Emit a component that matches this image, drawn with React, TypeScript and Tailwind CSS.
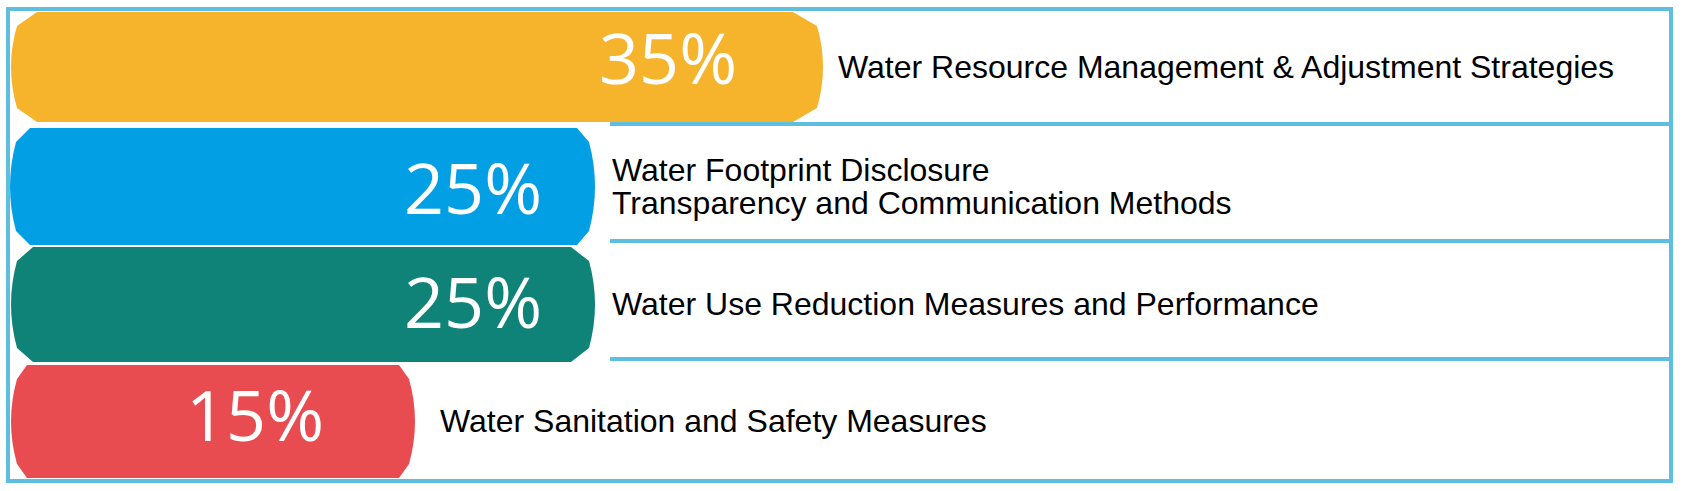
import React from 'react';

interface Row {
  pct: string;
  color: string;
  w: number;
  h: number;
  cl: number;
  cr: number;
  barCls: string;
  labelCls: string;
  lines: string[];
}

const rows: Row[] = [
  {
    pct: '35%',
    color: '#f6b42d',
    w: 812,
    h: 110,
    cl: 26,
    cr: 30,
    barCls: 'ml-[1px] w-[812px] h-[110px] pr-[86px] pb-[20px]',
    labelCls: 'ml-[15px]',
    lines: ['Water Resource Management & Adjustment Strategies'],
  },
  {
    pct: '25%',
    color: '#039fe5',
    w: 585,
    h: 117,
    cl: 20,
    cr: 18,
    barCls: 'w-[585px] h-[117px] pr-[53px] pb-0',
    labelCls: 'ml-[17px]',
    lines: ['Water Footprint Disclosure', 'Transparency and Communication Methods'],
  },
  {
    pct: '25%',
    color: '#0f8377',
    w: 584,
    h: 115,
    cl: 22,
    cr: 24,
    barCls: 'ml-[1px] w-[584px] h-[115px] pr-[53px] pb-[8px]',
    labelCls: 'ml-[17px]',
    lines: ['Water Use Reduction Measures and Performance'],
  },
  {
    pct: '15%',
    color: '#e84c50',
    w: 404,
    h: 113,
    cl: 16,
    cr: 16,
    barCls: 'ml-[1px] w-[404px] h-[113px] pr-[91px] pb-[16px]',
    labelCls: 'ml-[25px]',
    lines: ['Water Sanitation and Safety Measures'],
  },
];

// banner outline: cut corners plus a slight bulge on both ends
function bannerPath(w: number, h: number, cl: number, cr: number) {
  const dy = 14;
  const s = 6;
  return [
    `M ${cl} 0`,
    `L ${w - cr} 0`,
    `L ${w - s} ${dy}`,
    `Q ${w + s} ${h / 2} ${w - s} ${h - dy}`,
    `L ${w - cr} ${h}`,
    `L ${cl} ${h}`,
    `L ${s} ${h - dy}`,
    `Q ${-s} ${h / 2} ${s} ${dy}`,
    'Z',
  ].join(' ');
}

function Banner({ row }: { row: Row }) {
  return (
    <div className={`relative flex shrink-0 items-center justify-end ${row.barCls}`}>
      <svg
        className="absolute inset-0"
        width={row.w}
        height={row.h}
        viewBox={`0 0 ${row.w} ${row.h}`}
      >
        <path d={bannerPath(row.w, row.h, row.cl, row.cr)} fill={row.color} />
      </svg>
      <span className="relative text-[70px] leading-none text-white font-['Open_Sans',sans-serif]">
        {row.pct}
      </span>
    </div>
  );
}

function Divider({ className }: { className: string }) {
  return <div className={`ml-[600px] h-1 shrink-0 bg-[#5ebee0] ${className}`} />;
}

export default function App() {
  return (
    <div className="w-[1682px] h-[491px] bg-white pl-[6px] pt-[7px]">
      <div className="flex h-[476px] w-[1667px] flex-col border-4 border-[#5ebee0] font-['Liberation_Sans',Arial,sans-serif] text-black">
        {rows.map((row, i) => (
          <React.Fragment key={i}>
            <div
              className={`flex items-center ${
                i === 0 ? 'mt-[1px]' : i === 1 ? 'mt-[2px]' : 'mt-[4px]'
              }`}
            >
              <Banner row={row} />
              <div className={`text-[32px] leading-[33px] ${row.labelCls}`}>
                {row.lines.map((line) => (
                  <div key={line} className="whitespace-nowrap">
                    {line}
                  </div>
                ))}
              </div>
            </div>
            {i === 0 && <Divider className="mt-0" />}
            {i === 1 && <Divider className="mt-[-6px]" />}
            {i === 2 && <Divider className="mt-[-5px]" />}
          </React.Fragment>
        ))}
      </div>
    </div>
  );
}
